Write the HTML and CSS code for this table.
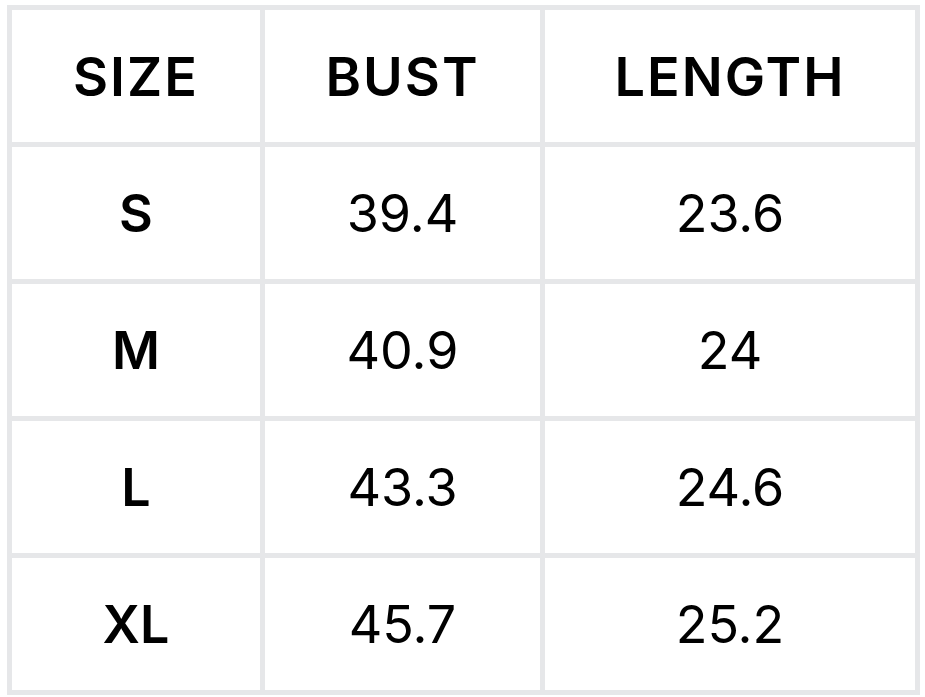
FILE: index.html
```html
<!DOCTYPE html>
<html lang="en">
<head>
<meta charset="utf-8">
<title>Size chart</title>
<link rel="stylesheet" href="styles.css">
</head>
<body>
<div class="chart">
  <div class="cell head">SIZE</div>
  <div class="cell head">BUST</div>
  <div class="cell head">LENGTH</div>
  <div class="cell size">S</div>
  <div class="cell">39.4</div>
  <div class="cell">23.6</div>
  <div class="cell size">M</div>
  <div class="cell">40.9</div>
  <div class="cell">24</div>
  <div class="cell size">L</div>
  <div class="cell">43.3</div>
  <div class="cell">24.6</div>
  <div class="cell size">XL</div>
  <div class="cell">45.7</div>
  <div class="cell">25.2</div>
</div>
</body>
</html>
```
FILE: styles.css
```css
html, body {
  margin: 0;
  padding: 0;
  background: #ffffff;
}
body {
  font-family: Inter, "Liberation Sans", sans-serif;
  color: #000;
}
.chart {
  display: grid;
  grid-template-columns: 248px 275px 370px;
  grid-auto-rows: 132px;
  gap: 5px;
  padding: 5px;
  margin: 5px 0 0 7px;
  width: max-content;
  background: #e6e7e9;
}
.cell {
  background: #fff;
  display: flex;
  align-items: center;
  justify-content: center;
  font-size: 52px;
  font-weight: 400;
}
.head {
  font-size: 54px;
  font-weight: 600;
  letter-spacing: 2px;
}
.size {
  font-weight: 600;
}
```
